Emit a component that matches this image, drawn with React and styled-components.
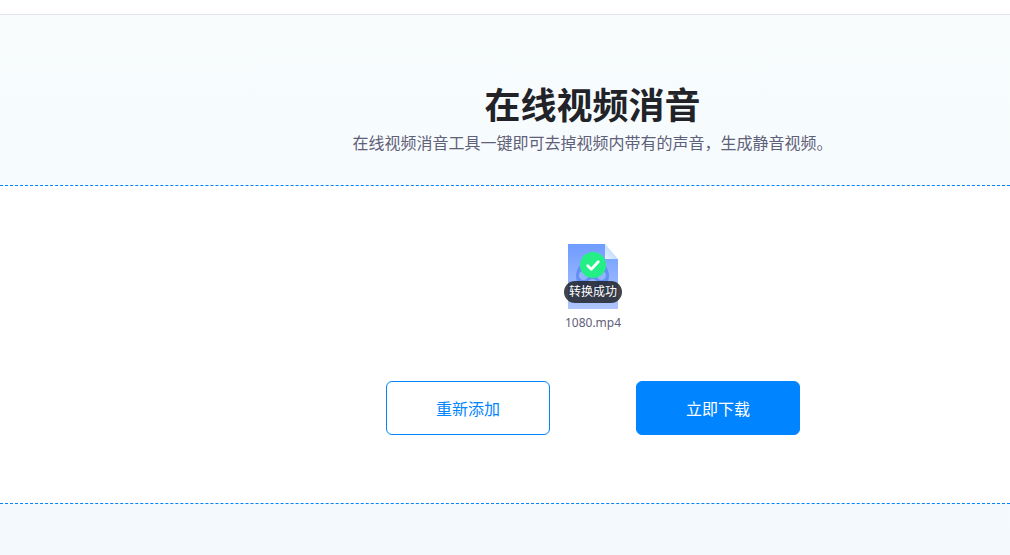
import React from "react";
import styled, { createGlobalStyle } from "styled-components";

const files = [{ name: "1080.mp4", status: "转换成功" }];

const VideoIcon = () => (
  <svg width="50" height="65" viewBox="0 0 50 65" aria-hidden="true">
    <defs>
      <linearGradient id="paper" x1="0" y1="0" x2="0" y2="1">
        <stop offset="0" stopColor="#6f9cff" />
        <stop offset="1" stopColor="#afc5fe" />
      </linearGradient>
      <linearGradient id="fold" x1="0" y1="1" x2="1" y2="0">
        <stop offset="0" stopColor="#e4f0ff" />
        <stop offset="1" stopColor="#abcdfd" />
      </linearGradient>
    </defs>
    <path d="M0 0H37V15H50V65H0Z" fill="url(#paper)" />
    <path d="M37 0L50 15H37Z" fill="url(#fold)" />
    <circle cx="24.5" cy="32" r="16.5" fill="#6490f4" />
    <g fill="#93b3fc">
      <circle cx="24.5" cy="23" r="4.5" />
      <circle cx="15.5" cy="31.5" r="4.5" />
      <circle cx="33.5" cy="31.5" r="4.5" />
      <circle cx="24.5" cy="39.5" r="4.5" />
    </g>
  </svg>
);

const SuccessIcon = () => (
  <svg width="26" height="26" viewBox="0 0 26 26" aria-hidden="true">
    <circle cx="13" cy="13" r="13" fill="#24ef87" />
    <path
      d="M7.7 13.7L11.3 17.3L18.3 9.7"
      fill="none"
      stroke="#fff"
      strokeWidth="2.8"
      strokeLinecap="round"
      strokeLinejoin="round"
    />
  </svg>
);

const FileItem = ({ file }) => (
  <FileContainer>
    <VideoIcon />
    <FileStatus>
      <SuccessIcon />
      <StatusText>{file.status}</StatusText>
    </FileStatus>
    <FileName>{file.name}</FileName>
  </FileContainer>
);

const App = () => (
  <>
    <GlobalStyle />
    <TopBar />
    <Main>
      <Intro>
        <Title>在线视频消音</Title>
        <Subtitle>
          在线视频消音工具一键即可去掉视频内带有的声音，生成静音视频。
        </Subtitle>
      </Intro>
      <Workspace>
        {files.map(file => (
          <FileItem key={file.name} file={file} />
        ))}
        <Actions>
          <ActionButton type="button">重新添加</ActionButton>
          <ActionButton type="button" $primary>
            立即下载
          </ActionButton>
        </Actions>
      </Workspace>
    </Main>
  </>
);

export default App;

const GlobalStyle = createGlobalStyle`
  * {
    box-sizing: border-box;
  }
  body {
    margin: 0;
    background: #fff;
    font-family: "Noto Sans", "Noto Sans CJK SC", sans-serif;
  }
`;

const TopBar = styled.header`
  height: 15px;
  background: #fff;
  border-bottom: 1px solid #e3e4ec;
`;

const Main = styled.main`
  min-height: calc(100vh - 15px);
  background: linear-gradient(#f8fcfd, #f3f9fd);
`;

const Intro = styled.section`
  padding: 67px 0 29px 175px;
  text-align: center;
`;

const Title = styled.h1`
  margin: 0;
  color: #222329;
  font-size: 36px;
  font-weight: 700;
  line-height: 48px;
`;

const Subtitle = styled.p`
  margin: 0;
  color: #5f6079;
  font-size: 16px;
  line-height: 26px;
`;

const Workspace = styled.section`
  display: flex;
  flex-direction: column;
  align-items: center;
  padding: 58px 0 68px 176px;
  background: #fff;
  border-top: 1px dashed #0084ff;
  border-bottom: 1px dashed #0084ff;
`;

const FileContainer = styled.div`
  position: relative;
  display: flex;
  flex-direction: column;
  align-items: center;
`;

const FileStatus = styled.div`
  position: absolute;
  top: 8px;
  display: flex;
  flex-direction: column;
  align-items: center;
  gap: 3px;
`;

const StatusText = styled.span`
  padding: 0 5px;
  border-radius: 11px;
  background: rgba(34, 35, 41, 0.85);
  color: #fff;
  font-size: 12px;
  line-height: 22px;
  white-space: nowrap;
`;

const FileName = styled.span`
  margin-top: 4px;
  color: #5f6079;
  font-size: 12px;
  line-height: 20px;
`;

const Actions = styled.div`
  display: flex;
  gap: 86px;
  margin-top: 48px;
`;

const ActionButton = styled.button`
  width: 164px;
  height: 54px;
  padding: 0;
  border: 1px solid #0084ff;
  border-radius: 6px;
  background: ${props => (props.$primary ? "#0084ff" : "#fff")};
  color: ${props => (props.$primary ? "#fff" : "#0084ff")};
  font-family: inherit;
  font-size: 16px;
  cursor: pointer;
`;
